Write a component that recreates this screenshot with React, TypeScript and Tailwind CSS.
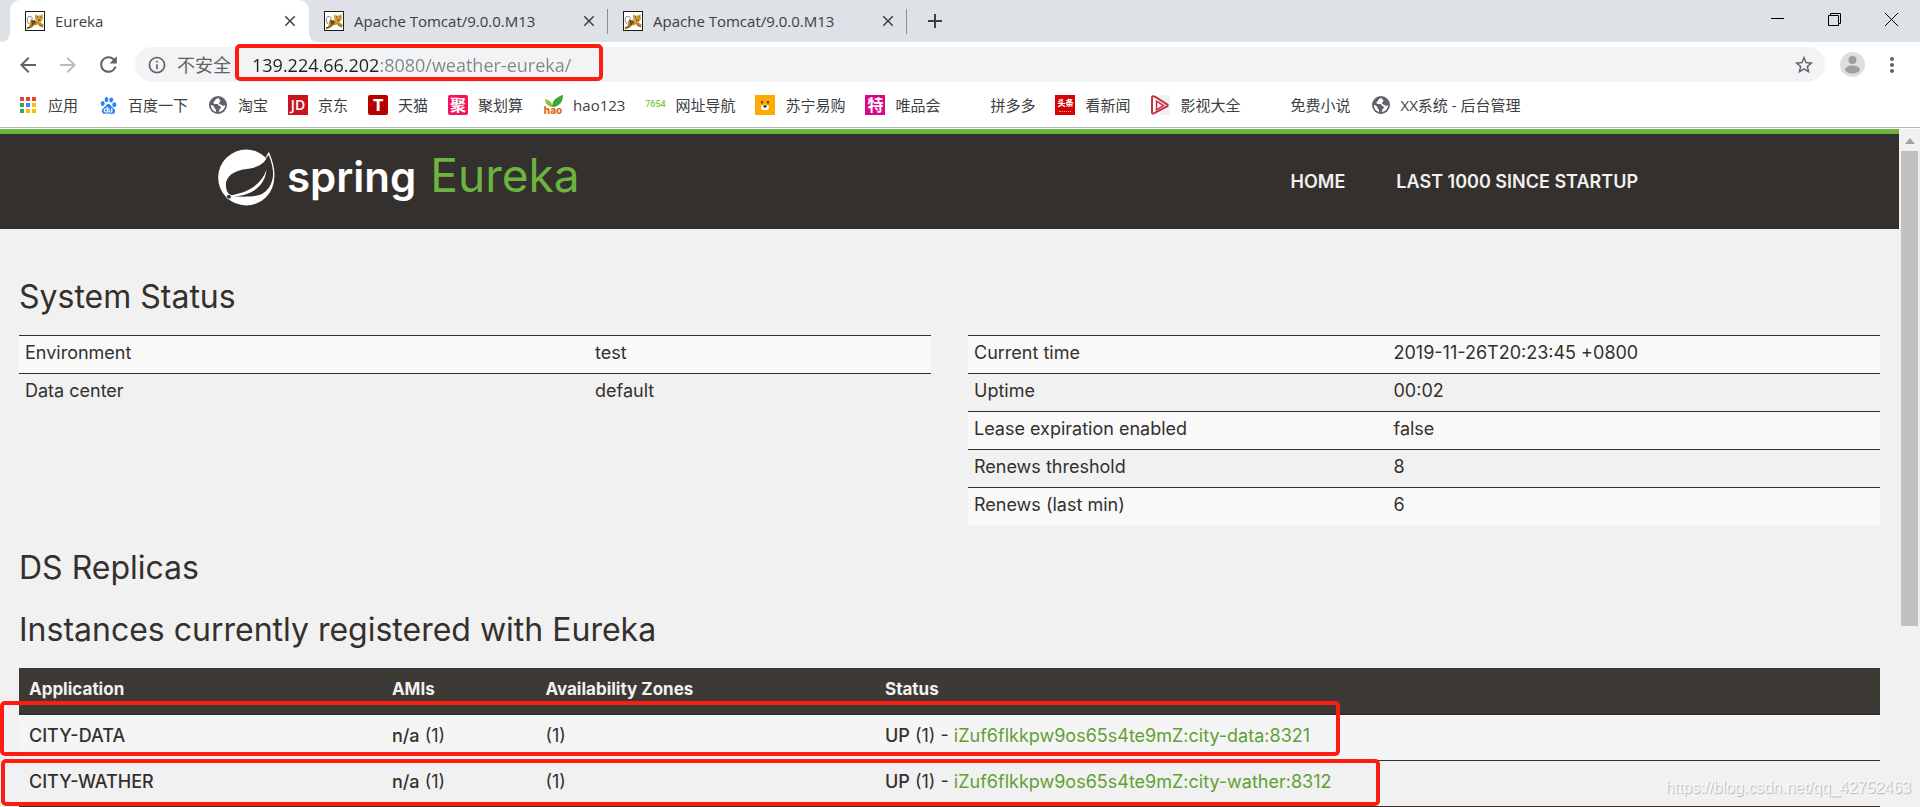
import React from "react";
import {
  MdAdd,
  MdArrowBack,
  MdArrowForward,
  MdClose,
  MdInfoOutline,
  MdMoreVert,
  MdRefresh,
  MdStarBorder,
} from "react-icons/md";
import { SiBaidu } from "react-icons/si";

const tabs = [
  { title: "Eureka", active: true },
  { title: "Apache Tomcat/9.0.0.M13", active: false },
  { title: "Apache Tomcat/9.0.0.M13", active: false },
];

const leftStatus = [
  ["Environment", "test"],
  ["Data center", "default"],
];

const rightStatus = [
  ["Current time", "2019-11-26T20:23:45 +0800"],
  ["Uptime", "00:02"],
  ["Lease expiration enabled", "false"],
  ["Renews threshold", "8"],
  ["Renews (last min)", "6"],
];

const instances = [
  { name: "CITY-DATA", link: "iZuf6flkkpw9os65s4te9mZ:city-data:8321" },
  { name: "CITY-WATHER", link: "iZuf6flkkpw9os65s4te9mZ:city-wather:8312" },
];

const TomcatIcon = () => (
  <svg viewBox="0 0 20 20" className="size-5 shrink-0">
    <rect x="0.5" y="0.5" width="19" height="19" fill="#fff" stroke="#1c1c1c" />
    <path d="M4 13C1 10 2 5 5 5.500S8 8.500 6 9" fill="none" stroke="#777" strokeWidth="0.900" />
    <path d="M5 10l3-1 4 1 3 1 4 3-1 1.500-5-2-4 1-2 2-5 2-.5-1.500 3-1.500z" fill="#c98d23" />
    <path d="M10 3l2 1.500h3L17.500 3 18 8l-2 3-3 .5-3-3z" fill="#d9a33a" />
    <path d="M6 9l4 .5 1 2-3 3-2 1 1-2.500z" fill="#6b5220" />
    <path d="M12 6h1M15.500 6h1M13 9h2.500" stroke="#2b2b2b" strokeWidth="1" />
    <path d="M2 17l4-1.500M14 14l4 2" stroke="#3b2d12" strokeWidth="0.900" />
  </svg>
);

const GlobeIcon = () => (
  <svg viewBox="0 0 20 20" className="size-5">
    <circle cx="10" cy="10" r="9" fill="#5f6368" />
    <path
      d="M10.500 2.800c-1.200 1.200-2.900.9-3.300 2.500-.2 1.200-2 1.100-1.700 2.600.3 1.400 2.300.8 3.800 1.100 1.500.4 1.200 1.900 2.600 2.200 1.400.2 1.300 1.700.3 2.400-1 .6-.5 2-1.700 3.500 3.700-.3 6.600-3.300 6.700-7-1 .9-2.400 1-3.200.1-.8-.9-2.500-.3-2.900-1.700-.4-1.300 1.400-1.500 1.300-2.700-.1-1.100-1.500-1.500-1.900-3z"
      fill="#fff"
    />
    <path d="M2.800 10c2 .2 3.400 1.300 3.600 2.800.2 1.300 1.800 1.200 1.700 2.700l-.2 1.400C5 16 3 13.400 2.800 10z" fill="#fff" />
  </svg>
);

const AppsIcon = () => (
  <svg viewBox="0 0 20 20" className="size-5">
    <path d="M2 2h4v4H2zM8 2h4v4H8zM14 2h4v4h-4z" fill="#ea4335" />
    <path d="M2 8h4v4H2zM2 14h4v4H2z" fill="#34a853" />
    <path d="M8 8h4v4H8z" fill="#4285f4" />
    <path d="M14 8h4v4h-4zM8 14h4v4H8zM14 14h4v4h-4z" fill="#fbbc05" />
  </svg>
);

const HaoIcon = () => (
  <svg viewBox="0 0 20 20" className="size-5">
    <path d="M9 12C9 6 13 2 20 0c0 6-3 11-9 12z" fill="#3da63a" />
    <path d="M9 12C4 11 2 8 2 4c4 1 7 3 8 8z" fill="#8cc63f" />
    <text x="10" y="19" textAnchor="middle" fontSize="10" fontWeight="800" fill="#e8641b" fontFamily="Inter, sans-serif">
      hao
    </text>
  </svg>
);

const SuningIcon = () => (
  <svg viewBox="0 0 20 20" className="size-5">
    <rect width="20" height="20" fill="#ffaa00" />
    <path d="M7 6v2.500M13 6v2.500" stroke="#2b2b2b" strokeWidth="1.500" />
    <ellipse cx="10" cy="12.500" rx="4" ry="2.800" fill="#fff" />
    <path d="M8 10.500h4l-1 2H9z" fill="#111" />
  </svg>
);

const VideoIcon = () => (
  <svg viewBox="0 0 20 20" className="size-5">
    <rect x="9" width="11" height="20" fill="#f1f1f3" />
    <path d="M2 2.500v15q0 1.500 2 .8l13-7q1.500-1 0-2L5 1.700Q2 .5 2 2.500z" fill="none" stroke="#c8333d" strokeWidth="2" />
    <path d="M6.500 6v9l7-4.500z" fill="#fff" stroke="#c8333d" strokeWidth="1.500" />
  </svg>
);

const bookmarks: { label: string; icon: React.ReactNode }[] = [
  { label: "应用", icon: <AppsIcon /> },
  { label: "百度一下", icon: <SiBaidu size={17} color="#3083f7" /> },
  { label: "淘宝", icon: <GlobeIcon /> },
  {
    label: "京东",
    icon: <span className="size-5 bg-[#c9141e] text-center text-sm leading-5 font-semibold text-white">JD</span>,
  },
  {
    label: "天猫",
    icon: (
      <span className="size-5 rounded-xs bg-[#b80000] text-center font-[Inter] text-base leading-5 font-extrabold text-white">
        T
      </span>
    ),
  },
  {
    label: "聚划算",
    icon: (
      <span className="flex size-5 items-center justify-center rounded-xs bg-[#f5145a] text-base font-bold text-white">
        聚
      </span>
    ),
  },
  { label: "hao123", icon: <HaoIcon /> },
  { label: "网址导航", icon: <span className="font-[Roboto] text-[9px] font-medium text-[#7ac943]">7654</span> },
  { label: "苏宁易购", icon: <SuningIcon /> },
  {
    label: "唯品会",
    icon: (
      <span className="flex size-5 items-center justify-center bg-[#d9068c] text-base font-bold text-white">特</span>
    ),
  },
  { label: "拼多多", icon: null },
  {
    label: "看新闻",
    icon: (
      <span className="flex size-5 flex-col items-center bg-[#d80000] pt-1 text-[8px] leading-2 font-black text-white">
        头条
        <span className="mt-1 w-3 border-t border-dotted border-[#ff9a9a]" />
      </span>
    ),
  },
  { label: "影视大全", icon: <VideoIcon /> },
  { label: "免费小说", icon: null },
  { label: "XX系统 - 后台管理", icon: <GlobeIcon /> },
];

const SpringLogo = () => (
  <svg viewBox="0 0 173 171" className="size-[57px]">
    <circle cx="85.500" cy="85.500" r="85" fill="#fff" />
    <path
      d="M154 12C146 42 122 56 86 60C48 65 24 82 24 108C24 124 29 134 38 138L46 142C70 145 95 144 115 141C146 136 166 110 168 80C168 55 161 32 154 12Z"
      fill="#34302d"
    />
    <path d="M147 24L154 12C164 36 171 58 169 82C167 100 160 115 150 125" fill="none" stroke="#fff" strokeWidth="4" />
    <path d="M30 141C84 134 130 112 147 62C144 104 112 140 44 143Z" fill="#fff" />
    <circle cx="33" cy="144" r="7" fill="#34302d" stroke="#fff" strokeWidth="2" />
  </svg>
);

const TabStrip = () => (
  <div className="flex h-[42px] items-stretch bg-[#dee1e6] pl-[10px] text-[15px] text-[#3c4043]">
    {tabs.map((tab, i) => (
      <div
        key={i}
        className={
          tab.active
            ? "relative flex w-[299px] items-center gap-[10px] rounded-t-[10px] bg-white pr-[10px] pl-[15px]"
            : "relative flex w-[299px] items-center gap-[10px] pr-[10px] pl-[15px]"
        }
      >
        {tab.active && (
          <>
            <svg viewBox="0 0 10 10" className="absolute bottom-0 -left-[10px] size-[10px]">
              <path d="M10 0v10H0Q10 10 10 0z" fill="#fff" />
            </svg>
            <svg viewBox="0 0 10 10" className="absolute -right-[10px] bottom-0 size-[10px]">
              <path d="M0 0v10h10Q0 10 0 0z" fill="#fff" />
            </svg>
          </>
        )}
        <TomcatIcon />
        <span className="flex-1 truncate">{tab.title}</span>
        <button type="button" aria-label="Close tab">
          <MdClose size={18} />
        </button>
        {!tab.active && <span className="absolute top-[9px] right-0 h-[25px] w-px bg-[#8b8f94]" />}
      </div>
    ))}
    <button type="button" aria-label="New tab" className="ml-4">
      <MdAdd size={24} />
    </button>
    <div className="ml-auto flex items-center gap-11 pr-[22px] pb-1 text-black">
      <button type="button" aria-label="Minimize">
        <svg viewBox="0 0 13 13" className="size-[13px]">
          <path d="M0 5.500h13" stroke="currentColor" />
        </svg>
      </button>
      <button type="button" aria-label="Restore">
        <svg viewBox="0 0 13 13" className="size-[13px]" fill="none" stroke="currentColor">
          <path d="M0.500 2.500h10v10h-10zM2.500 2.500v-2h10v10h-2" />
        </svg>
      </button>
      <button type="button" aria-label="Close window">
        <svg viewBox="0 0 13 13" className="size-[13px]" fill="none" stroke="currentColor">
          <path d="M0 0l13 13M13 0L0 13" />
        </svg>
      </button>
    </div>
  </div>
);

const Toolbar = () => (
  <div className="flex items-center bg-white pt-[5px] pr-4 pl-4 text-[#5f6368]">
    <div className="flex gap-4">
      <button type="button" aria-label="Back">
        <MdArrowBack size={24} />
      </button>
      <button type="button" aria-label="Forward" className="text-[#bbbdc0]">
        <MdArrowForward size={24} />
      </button>
      <button type="button" aria-label="Reload">
        <MdRefresh size={25} />
      </button>
    </div>
    <div className="relative ml-[14px] flex h-[35px] flex-1 items-center rounded-full bg-[#f1f3f4] pr-[10px] pl-3">
      <MdInfoOutline size={20} />
      <label htmlFor="address" className="ml-[10px] text-lg">
        不安全
      </label>
      <input
        id="address"
        type="text"
        defaultValue="139.224.66.202:8080/weather-eureka/"
        className="ml-[21px] h-[35px] min-w-0 flex-1 bg-linear-to-r from-[#202124] from-[128px] to-[#80868b] to-[128px] bg-clip-text text-lg text-transparent outline-none"
      />
      <button type="button" aria-label="Bookmark this page">
        <MdStarBorder size={22} />
      </button>
      <div className="absolute -top-[3px] left-[100px] h-[37px] w-[368px] rounded-[5px] border-4 border-[#fe1c11]" />
    </div>
    <button type="button" aria-label="Profile" className="ml-[15px]">
      <svg viewBox="0 0 25 25" className="size-[25px]">
        <circle cx="12.500" cy="12.500" r="12.500" fill="#dedede" />
        <circle cx="12.500" cy="8" r="4" fill="#9e9e9e" />
        <ellipse cx="12.500" cy="17.500" rx="7.500" ry="4" fill="#9e9e9e" />
      </svg>
    </button>
    <button type="button" aria-label="Menu" className="ml-[15px]">
      <MdMoreVert size={24} />
    </button>
  </div>
);

const BookmarksBar = () => (
  <nav className="flex h-[46px] items-center gap-5 border-b border-[#b6b4b6] bg-white pt-px pl-[18px] text-[15px] text-[#3c4043]">
    {bookmarks.map((item) => (
      <a key={item.label} href="#" className="flex shrink-0 items-center gap-[10px]">
        <span className="flex size-5 items-center justify-center">{item.icon}</span>
        {item.label}
      </a>
    ))}
  </nav>
);

const StatusTable = ({ rows, labelClass }: { rows: string[][]; labelClass: string }) => (
  <table className="w-full flex-1 table-fixed self-start">
    <tbody>
      {rows.map(([label, value]) => (
        <tr key={label} className="border-t border-[#34302d] odd:bg-[#f9f9f9]">
          <td className={labelClass}>{label}</td>
          <td className="px-[6px] pt-1 pb-2">{value}</td>
        </tr>
      ))}
    </tbody>
  </table>
);

const Instances = () => (
  <div className="relative">
    <table className="w-full table-fixed border-b border-[#34302d] text-left">
      <thead>
        <tr className="border-b-2 border-[#34302d] bg-[#3d3934] text-[17px] text-[#f1f1f1]">
          <th className="w-[19.5%] px-[10px] pt-[9px] pb-[11px]">Application</th>
          <th className="w-[8.25%] px-[10px] pt-[9px] pb-[11px]">AMIs</th>
          <th className="w-[18.25%] px-[10px] pt-[9px] pb-[11px]">Availability Zones</th>
          <th className="px-[10px] pt-[9px] pb-[11px]">Status</th>
        </tr>
      </thead>
      <tbody>
        {instances.map((app) => (
          <tr key={app.name} className="border-b border-[#34302d] odd:bg-[#f5f5f5]">
            <td className="px-[10px] pt-2 pb-3 font-medium">{app.name}</td>
            <td className="px-[10px] pt-2 pb-3">
              <b className="font-medium">n/a</b> (1)
            </td>
            <td className="px-[10px] pt-2 pb-3">(1)</td>
            <td className="px-[10px] pt-2 pb-3">
              <b className="font-medium">UP</b> (1) -{" "}
              <a href="#" className="text-[#5fa134]">
                {app.link}
              </a>
            </td>
          </tr>
        ))}
      </tbody>
    </table>
    <div className="absolute top-[33px] -left-[19px] h-[55px] w-[1340px] rounded-[5px] border-4 border-[#fe1c11]" />
    <div className="absolute top-[91px] -left-[18px] h-[47px] w-[1379px] rounded-[5px] border-4 border-[#fe1c11]" />
  </div>
);

const App = () => {
  return (
    <div className="relative flex h-screen flex-col overflow-hidden bg-white font-['Open_Sans','Noto_Sans_CJK_SC',sans-serif]">
      <TabStrip />
      <Toolbar />
      <BookmarksBar />
      <div className="mt-px flex min-h-0 flex-1 bg-[#f1f1f1]">
        <div className="min-w-0 flex-1 overflow-hidden font-[Inter,sans-serif] text-lg leading-[25px] text-[#34302d]">
          <header className="border-t-[5px] border-[#6db33f] bg-[#34302d]">
            <div className="mx-auto flex h-[95px] max-w-[1463px] items-center justify-between pr-[43px]">
              <a href="#" className="flex items-center gap-3 pb-2">
                <SpringLogo />
                <span className="flex items-baseline gap-[14px] pb-[6px] leading-none">
                  <span className="text-[42px] font-semibold text-white">spring</span>
                  <span className="text-[46px] text-[#6db33f]">Eureka</span>
                </span>
              </a>
              <nav className="flex gap-[51px] font-semibold text-[#f1f1f1]">
                <a href="#">HOME</a>
                <a href="#">LAST 1000 SINCE STARTUP</a>
              </nav>
            </div>
          </header>
          <main className="px-[19px]">
            <h1 className="mt-[50px] text-[32px] leading-9">System Status</h1>
            <div className="mt-5 flex gap-[37px]">
              <StatusTable rows={leftStatus} labelClass="w-[62.5%] px-[6px] pt-1 pb-2" />
              <StatusTable rows={rightStatus} labelClass="w-[46%] px-[6px] pt-1 pb-2" />
            </div>
            <h1 className="mt-[25px] text-[32px] leading-9">DS Replicas</h1>
            <h1 className="mt-[26px] mb-5 text-[32px] leading-9">Instances currently registered with Eureka</h1>
            <Instances />
          </main>
        </div>
        <div className="flex w-[21px] flex-col items-center">
          <svg viewBox="0 0 10 6" className="mt-[9px] mb-[7px] h-[6px] w-[10px]">
            <path d="M0 6L5 0l5 6z" fill="#a3a3a3" />
          </svg>
          <div className="h-[70%] w-[17px] bg-[#c1c1c1]" />
        </div>
      </div>
      <span className="absolute right-[9px] bottom-[7px] font-['Liberation_Sans',sans-serif] text-base text-white/80 [text-shadow:1px_1px_1px_rgb(0_0_0/0.25)]">
        https://blog.csdn.net/qq_42752463
      </span>
    </div>
  );
};

export default App;
